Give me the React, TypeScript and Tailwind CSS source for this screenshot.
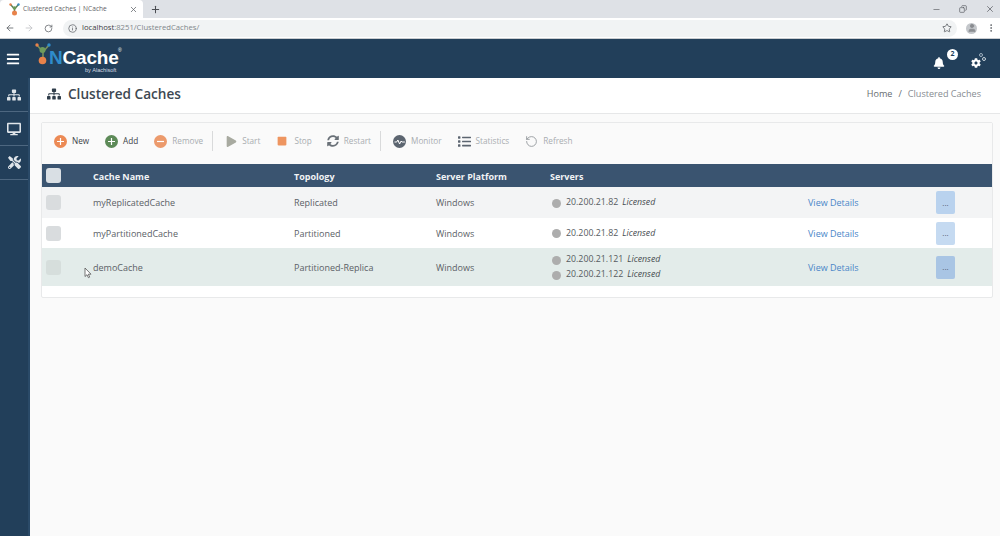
import React from 'react';
import { FaBars, FaBell, FaCog, FaDesktop, FaSitemap, FaTools, FaPlay, FaStop, FaSyncAlt, FaList } from 'react-icons/fa';
import { RotateCw, ArrowLeft, ArrowRight, Star, Info, X, Plus, Minus, Copy, EllipsisVertical, User } from 'lucide-react';

const font = "font-['Open_Sans','Noto_Sans',sans-serif]";

// small round icon with plus / minus in it
const RoundIcon = ({ color, minus }: { color: string; minus?: boolean }) => (
  <svg width="13" height="13" viewBox="0 0 13 13">
    <circle cx="6.5" cy="6.5" r="6.5" fill={color} />
    <path d={minus ? 'M3 6.5h7' : 'M3 6.5h7M6.5 3v7'} stroke="#fff" strokeWidth="1.2" />
  </svg>
);

const MonitorIcon = () => (
  <svg width="13" height="13" viewBox="0 0 13 13">
    <circle cx="6.5" cy="6.5" r="6.5" fill="#5c6570" />
    <path d="M1.5 7h2.2l1.2-2 1.7 4 1.5-3 .8 1h3" fill="none" stroke="#fff" strokeWidth="1" />
  </svg>
);

const ToolButton = ({
  icon,
  label,
  active,
  className,
}: {
  icon: React.ReactNode;
  label: string;
  active?: boolean;
  className?: string;
}) => (
  <div className={`flex items-center gap-[5px] ${className ?? ''}`}>
    {icon}
    <span className={`text-[8.2px] leading-none ${active ? 'text-[#3c4248]' : 'text-[#a9adb1]'}`}>{label}</span>
  </div>
);

const Divider = () => <div className="h-[20px] w-px bg-[#d9dadb]" />;

const Server = ({ ip }: { ip: string }) => (
  <div className="flex h-[15px] items-center">
    <span className="mr-[5px] h-[9px] w-[9px] rounded-full bg-[#adadad]" />
    <span className="text-[8.8px] text-[#555b60]">{ip}</span>
    <span className="ml-[4px] text-[8.8px] text-[#474c50] italic">Licensed</span>
  </div>
);

const rowGrid = 'grid grid-cols-[51px_201px_142px_114px_258px_128px_1fr] items-center';

const Row = ({
  name,
  topology,
  servers,
  className,
  box,
  btn,
}: {
  name: string;
  topology: string;
  servers: string[];
  className: string;
  box: string;
  btn: string;
}) => (
  <div className={`${rowGrid} text-[9px] text-[#5b6166] ${className}`}>
    <div className="pl-[4px]">
      <div className={`h-[15px] w-[15px] rounded-[3px] ${box}`} />
    </div>
    <div className="pt-[1px]">{name}</div>
    <div className="pt-[1px]">{topology}</div>
    <div className="pt-[1px]">Windows</div>
    <div className="pl-[2px] pt-[1px]">
      {servers.map((s) => (
        <Server key={s} ip={s} />
      ))}
    </div>
    <div className="pt-[1px] text-[#4a86c8]">View Details</div>
    <div className={`flex h-[23px] w-[19px] items-center justify-center rounded-[2px] text-[8px] text-[#4f5d6b] ${btn}`}>...</div>
  </div>
);

export default function App() {
  return (
    <div className={`flex h-[536px] w-[1000px] flex-col overflow-hidden bg-[#fafafa] ${font}`}>
      {/* browser tab strip */}
      <div className="flex h-[18px] items-center bg-[#dee1e6]">
        <div className="flex h-full w-[143px] items-center rounded-t-[4px] bg-white pl-[9px] pr-[5px]">
          <svg width="11" height="13" viewBox="0 0 11 13">
            <path d="M1.5 1.5 5.5 6M9.5 1.5 5.5 6V10" stroke="#55805a" strokeWidth="1.4" fill="none" />
            <circle cx="5.5" cy="10" r="2.5" fill="#e8824a" />
            <circle cx="5.5" cy="5" r="1.8" fill="#6b9a58" />
            <circle cx="1.5" cy="1.5" r="1.2" fill="#e8824a" />
            <circle cx="9.5" cy="1.5" r="1.2" fill="#3b8fc4" />
          </svg>
          <span className="ml-[3px] flex-1 text-[6.6px] whitespace-nowrap text-[#5f6368]">Clustered Caches | NCache</span>
          <X size={9} className="text-[#5f6368]" />
        </div>
        <Plus size={11} strokeWidth={2.2} className="ml-[7px] text-[#4a4d52]" />
        <div className="flex-1" />
        <Minus size={9} className="mr-[18px] text-[#6b6e73]" />
        <Copy size={8} className="mr-[18px] -scale-x-100 text-[#55585d]" />
        <X size={10} className="mr-[5px] text-[#6b6e73]" />
      </div>

      {/* browser address bar */}
      <div className="flex h-[21px] items-center border-b border-[#c9ccd0] bg-white pl-[5px] pr-[4px]">
        <ArrowLeft size={10} className="text-[#5f6368]" />
        <ArrowRight size={10} className="ml-[9px] text-[#c0c2c5]" />
        <RotateCw size={9} className="ml-[10px] text-[#5f6368]" />
        <div className="ml-[10px] flex h-[17px] flex-1 items-center rounded-full bg-[#f1f3f4] pl-[5px] pr-[5px]">
          <Info size={9} className="text-[#5f6368]" />
          <span className="ml-[5px] text-[7.7px] text-[#3c4043]">
            localhost<span className="text-[#80868b]">:8251/ClusteredCaches/</span>
          </span>
          <Star size={10} className="ml-auto text-[#5f6368]" />
        </div>
        <div className="ml-[9px] flex h-[11px] w-[11px] items-center justify-center overflow-hidden rounded-full bg-[#c4c7cb]">
          <User size={10} fill="#8a8d91" className="text-[#8a8d91]" />
        </div>
        <EllipsisVertical size={10} className="ml-[9px] text-[#5f6368]" />
      </div>

      {/* app header */}
      <div className="flex h-[39px] items-center bg-[#223f5a] pl-[6px] pr-[14px]">
        <FaBars size={14} className="mt-[1px] text-white" />
        <div className="relative ml-[15px] flex h-[39px] w-[85px] items-start">
          <svg width="17" height="22" viewBox="0 0 17 22" className="mt-[4px]">
            <path d="M2 2 8 9 14 2M8 9V18" stroke="#7a8f5a" strokeWidth="1.6" fill="none" />
            <circle cx="2" cy="2" r="1.7" fill="#e8824a" />
            <circle cx="14" cy="2" r="1.7" fill="#2f8ccb" />
            <circle cx="7.5" cy="7" r="3" fill="#6f9b5c" />
            <circle cx="7.5" cy="17.5" r="3.8" fill="#e8824a" />
          </svg>
          <span className="-ml-[3px] mt-[13px] font-['Liberation_Sans',sans-serif] text-[19px] leading-[12px] font-bold tracking-[-0.2px] text-white">
            <span className="text-[#2f8ccb]">N</span>Cache
          </span>
          <span className="absolute left-[83px] top-[9px] font-['Liberation_Sans',sans-serif] text-[5px] leading-[5px] text-white">®</span>
          <span className="absolute top-[28px] left-[50px] font-['Liberation_Sans',sans-serif] text-[5.6px] leading-[6px] text-[#d5dbe1]">by Alachisoft</span>
        </div>
        <div className="flex-1" />
        <div className="relative mr-[26px]">
          <FaBell size={12} className="mt-[8px] text-white" />
          <span className="absolute top-[0px] left-[14px] flex h-[11px] w-[11px] items-center justify-center rounded-full bg-white text-[7px] font-bold text-[#223f5a]">2</span>
        </div>
        <div className="relative mt-[5px] h-[15px] w-[15px]">
          <FaCog size={10} className="absolute bottom-[1px] left-0 text-white" />
          <span className="absolute right-[0px] top-[3px] h-[4px] w-[4px] rounded-full border border-[#c9d3dc]" />
          <span className="absolute right-[3px] top-[-1px] h-[4px] w-[4px] rounded-full border border-[#9fb0bf]" />
        </div>
      </div>

      <div className="flex flex-1">
        {/* sidebar */}
        <div className="flex w-[30px] flex-col border-r-2 border-[#2a4a68] bg-[#223f5a]">
          {[<FaSitemap key="a" size={14} />, <FaDesktop key="b" size={14} />, <FaTools key="c" size={13} />].map((icon) => (
            <div key={icon.key} className="flex h-[34px] items-center justify-center border-b border-[#4d6780] text-[#dfe5ea]">
              {icon}
            </div>
          ))}
        </div>

        <div className="flex flex-1 flex-col">
          {/* page title */}
          <div className="flex h-[36px] items-center border-b border-[#e6e7e8] bg-white pb-[3px] pl-[17px] pr-[19px]">
            <FaSitemap size={14} className="text-[#2f3d4a]" />
            <h1 className="ml-[7px] text-[13.6px] font-semibold text-[#3d4852]">Clustered Caches</h1>
            <div className="ml-auto text-[9.1px] text-[#666b70]">
              Home<span className="mx-[6px]">/</span>
              <span className="text-[#868b90]">Clustered Caches</span>
            </div>
          </div>

          {/* card with toolbar and table */}
          <div className="mb-0 ml-[11px] mr-[7px] mt-[8px] h-[176px] rounded-[2px] border border-[#e8e9ea] bg-white">
            <div className="flex h-[41px] items-center bg-[#fafafa] pb-[5px] pl-[12px]">
              <ToolButton icon={<RoundIcon color="#ec8a55" />} label="New" active />
              <ToolButton className="ml-[16px]" icon={<RoundIcon color="#5d8a58" />} label="Add" active />
              <ToolButton className="ml-[16px]" icon={<RoundIcon color="#ec9a6c" minus />} label="Remove" />
              <div className="ml-[9px]"><Divider /></div>
              <ToolButton className="ml-[13px]" icon={<FaPlay size={11} className="text-[#a8aaa0]" />} label="Start" />
              <ToolButton className="ml-[17px]" icon={<FaStop size={10} className="mr-[2px] text-[#ee9560]" />} label="Stop" />
              <ToolButton className="ml-[15px]" icon={<FaSyncAlt size={12} className="text-[#6a7178]" />} label="Restart" />
              <div className="ml-[9px]"><Divider /></div>
              <ToolButton className="ml-[12px]" icon={<MonitorIcon />} label="Monitor" />
              <ToolButton className="ml-[16px]" icon={<FaList size={13} className="text-[#5c6570]" />} label="Statistics" />
              <ToolButton className="ml-[16px]" icon={<RotateCw size={13} strokeWidth={1.6} className="-scale-x-100 text-[#8f9398]" />} label="Refresh" />
            </div>

            <div className={`${rowGrid} h-[23px] bg-[#3a5470] text-[9px] font-bold text-[#f1f3f5]`}>
              <div className="pl-[4px]">
                <div className="h-[15px] w-[15px] rounded-[3px] bg-[#d9dfe4]" />
              </div>
              <div className="pt-[2px]">Cache Name</div>
              <div className="pt-[2px]">Topology</div>
              <div className="pt-[2px]">Server Platform</div>
              <div className="pt-[2px]">Servers</div>
            </div>

            <Row className="h-[31px] bg-[#f3f4f5]" box="bg-[#d9dcde]" btn="bg-[#b9d2ee]" name="myReplicatedCache" topology="Replicated" servers={['20.200.21.82']} />
            <Row className="h-[30px] bg-white" box="bg-[#d9dcde]" btn="bg-[#c5daf1]" name="myPartitionedCache" topology="Partitioned" servers={['20.200.21.82']} />
            <div className="relative">
              <Row className="h-[38px] bg-[#e3ecea]" box="bg-[#d6dedc]" btn="bg-[#a9c5e4]" name="demoCache" topology="Partitioned-Replica" servers={['20.200.21.121', '20.200.21.122']} />
              <svg width="8" height="12" viewBox="0 0 8 12" className="absolute left-[42px] top-[19px]">
                <path d="M1 1v8.5l2-1.8 1.4 3 1.3-.6-1.4-2.9H7z" fill="#fff" stroke="#555" strokeWidth="0.8" />
              </svg>
            </div>
          </div>
        </div>
      </div>
    </div>
  );
}
